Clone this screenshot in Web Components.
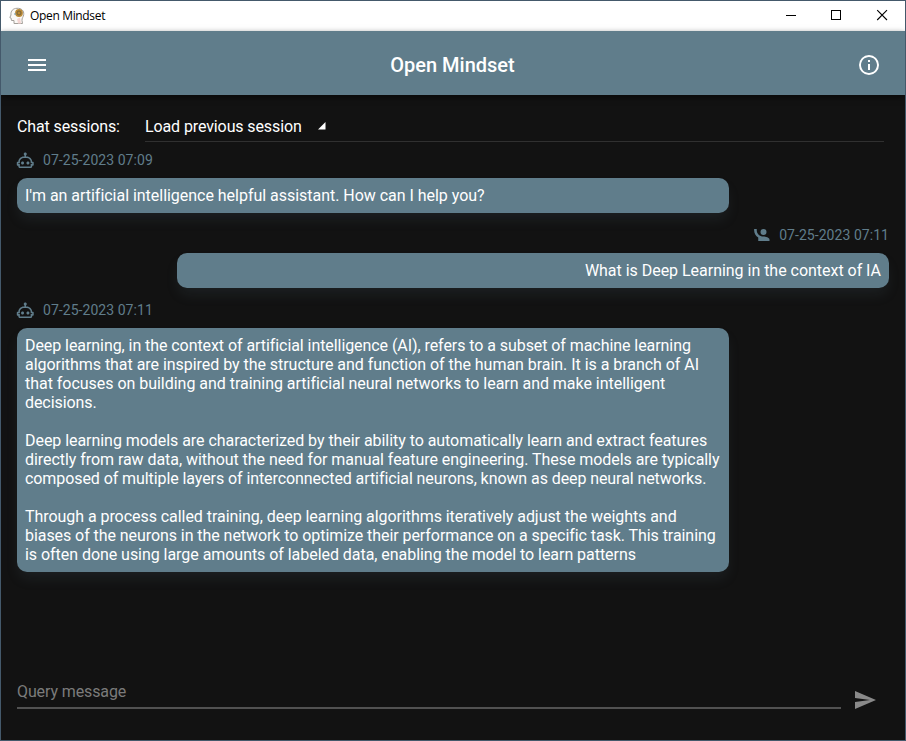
<!DOCTYPE html>
<html lang="en"><head><meta charset="utf-8"><title>Open Mindset</title>
<style>html,body{margin:0;height:100%;background:#121212}body{font-family:Roboto,"Liberation Sans",sans-serif}</style></head>
<body>
<app-window>
  <title-bar slot="title">Open Mindset</title-bar>
  <tool-bar slot="toolbar">Open Mindset</tool-bar>
  <session-picker label="Chat sessions:">Load previous session</session-picker>
  <message-list>
    <chat-message time="07-25-2023 07:09"><text-line track="-.027">I'm an artificial intelligence helpful assistant. How can I help you?</text-line></chat-message>
    <chat-message from="user" time="07-25-2023 07:11"><text-line track="-.025">What is Deep Learning in the context of IA</text-line></chat-message>
    <chat-message time="07-25-2023 07:11">
      <text-line track="-.068">Deep learning, in the context of artificial intelligence (AI), refers to a subset of machine learning</text-line>
      <text-line track="-.04">algorithms that are inspired by the structure and function of the human brain. It is a branch of AI</text-line>
      <text-line track="-.03">that focuses on building and training artificial neural networks to learn and make intelligent</text-line>
      <text-line track="-.08">decisions.</text-line>
      <text-line></text-line>
      <text-line track="-.05">Deep learning models are characterized by their ability to automatically learn and extract features</text-line>
      <text-line track="-.055">directly from raw data, without the need for manual feature engineering. These models are typically</text-line>
      <text-line track="-.083">composed of multiple layers of interconnected artificial neurons, known as deep neural networks.</text-line>
      <text-line></text-line>
      <text-line track="-.053">Through a process called training, deep learning algorithms iteratively adjust the weights and</text-line>
      <text-line track="-.065">biases of the neurons in the network to optimize their performance on a specific task. This training</text-line>
      <text-line track="-.046">is often done using large amounts of labeled data, enabling the model to learn patterns</text-line>
    </chat-message>
  </message-list>
  <query-bar slot="footer">Query message</query-bar>
</app-window>
<script>
const define = (name, html) => customElements.define(name, class extends HTMLElement {
  constructor() {
    super();
    const t = document.createElement('template');
    t.innerHTML = typeof html === 'function' ? html(this) : html;
    this.attachShadow({mode: 'open'}).append(t.content.cloneNode(true));
  }
});

define('app-window', `<style>
:host{display:flex;flex-direction:column;box-sizing:border-box;width:100vw;height:100vh;border:1px solid #44596b;background:#121212;color:#fff;overflow:hidden}
main{flex:1;padding:16px 16px 0;min-height:0}
</style><slot name="title"></slot><slot name="toolbar"></slot><main><slot></slot></main><slot name="footer"></slot>`);

define('title-bar', `<style>
:host{display:flex;align-items:center;height:30px;background:#fff;color:#000;font:12px "Open Sans","Noto Sans",sans-serif;letter-spacing:-.34px}
.logo{margin:0 5px 0 8px}
.name{flex:1;margin-top:-1px}
.ctl{width:46px;height:30px}
.ctl:last-child{margin-right:-1px}
</style>
<svg class="logo" width="16" height="18" viewBox="0 0 16 18"><path d="M5 16.500V13.500H2.500L2 11L.8 10.500L2 8C1.500 4 4 1.300 8 1.300C12.500 1 15.200 4 14.700 7.500C14.400 10 12.800 11 13 13.500L13.500 16.500Z" fill="#fbf9f6" stroke="#a4a09a" stroke-width="1"/><path d="M8 12L11 10.500L12 16.500H9Z" fill="#f4d5d2"/><circle cx="10" cy="6" r="3.900" fill="#b98a36"/><circle cx="10" cy="6" r="2" fill="none" stroke="#79643a"/><path d="M5 7h2" stroke="#6d9bb1"/></svg>
<span class="name"><slot></slot></span>
<svg class="ctl" viewBox="0 0 46 30" shape-rendering="crispEdges"><path d="M18 14.500H28" stroke="#000"/></svg>
<svg class="ctl" viewBox="0 0 46 30" shape-rendering="crispEdges"><rect x="17.500" y="9.500" width="9" height="9" fill="none" stroke="#000"/></svg>
<svg class="ctl" viewBox="0 0 46 30"><path d="M17.200 9.200L27 19M27 9.200L17.200 19" stroke="#000" stroke-width="1.100"/></svg>`);

define('tool-bar', `<style>
:host{display:grid;grid-template-columns:72px 1fr 72px;align-items:center;justify-items:center;height:64px;background:#607d8b;font-size:20px;font-weight:500;box-shadow:0 2px 6px #0008}
svg{width:24px;height:24px;fill:#fff;margin-top:4px}
.name{line-height:24px;padding:3px 1px 0 0}
</style>
<svg viewBox="0 0 24 24"><path d="M3 6H21V8H3V6M3 11H21V13H3V11M3 16H21V18H3V16Z"/></svg>
<span class="name"><slot></slot></span>
<svg viewBox="0 0 24 24"><path d="M11,9H13V7H11M12,20C7.59,20 4,16.410 4,12C4,7.590 7.590,4 12,4C16.410,4 20,7.590 20,12C20,16.410 16.410,20 12,20M12,2A10,10 0 0,0 2,12A10,10 0 0,0 12,22A10,10 0 0,0 22,12A10,10 0 0,0 12,2M11,17H13V11H11V17Z"/></svg>`);

define('session-picker', el => `<style>
:host{display:flex;height:31px;line-height:32px;font-size:16px}
.label{width:128px;letter-spacing:-.11px}
.field{flex:1;box-sizing:border-box;height:31px;margin-right:5px;border-bottom:1px solid #303030;display:flex;letter-spacing:-.11px}
svg{margin:11px 0 0 16px}
</style><span class="label">${el.getAttribute('label')}</span>
<span class="field"><slot></slot><svg width="8" height="8"><path d="M7.500 0V7.500H0Z" fill="#fff"/></svg></span>`);

define('message-list', `<style>:host{display:flex;flex-direction:column;gap:14px;padding-top:10px}</style><slot></slot>`);

const bot = 'M17.5 15.5C17.5 16.61 16.61 17.5 15.5 17.5S13.5 16.61 13.5 15.5 14.4 13.5 15.5 13.5 17.5 14.4 17.5 15.5M8.5 13.5C7.4 13.5 6.5 14.4 6.5 15.5S7.4 17.5 8.5 17.5 10.5 16.61 10.5 15.5 9.61 13.5 8.5 13.5M23 15V18C23 18.55 22.55 19 22 19H21V20C21 21.11 20.11 22 19 22H5C3.9 22 3 21.11 3 20V19H2C1.45 19 1 18.55 1 18V15C1 14.45 1.45 14 2 14H3C3 10.13 6.13 7 10 7H11V5.73C10.4 5.39 10 4.74 10 4C10 2.9 10.9 2 12 2S14 2.9 14 4C14 4.74 13.6 5.39 13 5.73V7H14C17.87 7 21 10.13 21 14H22C22.55 14 23 14.45 23 15M21 16H19V14C19 11.24 16.76 9 14 9H10C7.24 9 5 11.24 5 14V16H3V17H5V20H19V17H21V16Z';
const person = 'M1.5,4V5.5C1.5,9.65 3.71,13.28 7,15.3V20H22V18C22,15.34 16.67,14 14,14C14,14 13.83,14 13.75,14C9,14 5,10 5,5.5V4M14,4A4,4 0 0,0 10,8A4,4 0 0,0 14,12A4,4 0 0,0 18,8A4,4 0 0,0 14,4Z';
define('chat-message', el => `<style>
:host{display:flex;flex-direction:column;align-items:flex-start}
:host([from=user]){align-items:flex-end;text-align:right}
.meta{display:flex;align-items:center;gap:8px;height:16px;margin-bottom:10px;color:#607d8b;font-size:14px;line-height:16px;letter-spacing:.05px}
svg{width:18px;height:18px;fill:currentColor}
:host(:not([from])) svg{margin:0 1px 0 -1px;width:18.500px;height:18.500px;margin-right:.5px}
.bubble{box-sizing:border-box;width:712px;padding:8px;min-height:35px;border-radius:10px;background:#607d8b;font-size:16px;line-height:19px;box-shadow:0 8px 14px -2px #607d8b22}
</style><div class="meta"><svg viewBox="0 0 24 24"><path d="${el.getAttribute('from') === 'user' ? person : bot}"/></svg><span>${el.getAttribute('time')}</span></div>
<div class="bubble"><slot></slot></div>`);

define('text-line', el => `<style>:host{display:block;height:19px;white-space:nowrap;letter-spacing:${el.getAttribute('track') || 0}px}</style><slot></slot>`);

define('query-bar', `<style>
:host{display:flex;height:62px;padding:0 28px 0 16px;color:#7b7b7b;font-size:16px}
.input{flex:1;box-sizing:border-box;height:31px;border-bottom:2px solid #515151;line-height:28px;letter-spacing:-.11px}
svg{width:24px;height:24px;margin:10px 0 0 12px;fill:#898989}
</style><span class="input"><slot></slot></span><svg viewBox="0 0 24 24"><path d="M2,21L23,12L2,3V10L17,12L2,14V21Z"/></svg>`);
</script>
</body></html>
